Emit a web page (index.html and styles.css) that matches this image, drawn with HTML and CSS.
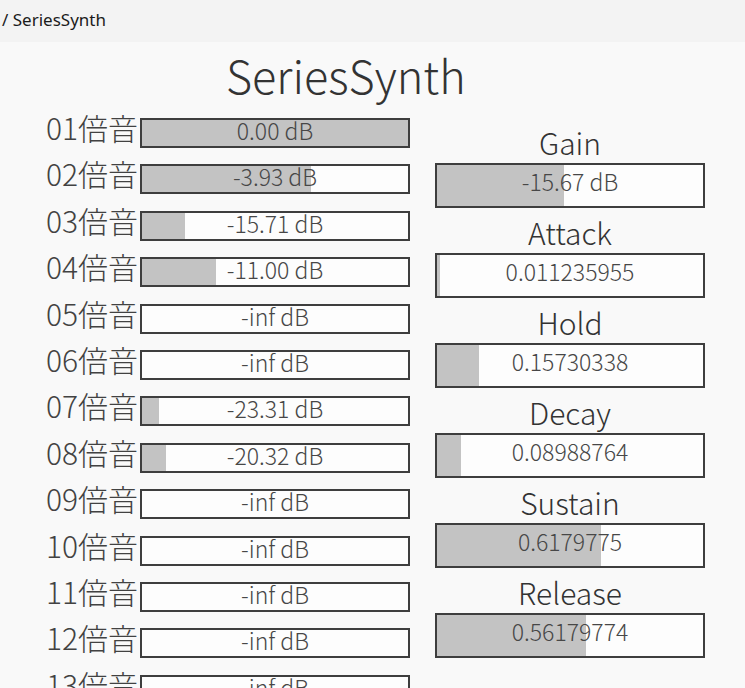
FILE: index.html
```html
<!DOCTYPE html>
<html lang="ja">
<head>
<meta charset="utf-8">
<title>SeriesSynth</title>
<link rel="stylesheet" href="styles.css">
</head>
<body>
<header class="topbar">/ SeriesSynth</header>
<main class="app">
  <h1 class="title">SeriesSynth</h1>
  <div class="columns">
    <section class="harmonics">
      <div class="row"><span class="label">01倍音</span><div class="bar"><span class="val">0.00 dB</span><div class="fill" style="width:100%"></div></div></div>
      <div class="row"><span class="label">02倍音</span><div class="bar"><span class="val">-3.93 dB</span><div class="fill" style="width:63.6%"></div></div></div>
      <div class="row"><span class="label">03倍音</span><div class="bar"><span class="val">-15.71 dB</span><div class="fill" style="width:16.0%"></div></div></div>
      <div class="row"><span class="label">04倍音</span><div class="bar"><span class="val">-11.00 dB</span><div class="fill" style="width:27.8%"></div></div></div>
      <div class="row"><span class="label">05倍音</span><div class="bar"><span class="val">-inf dB</span><div class="fill" style="width:0%"></div></div></div>
      <div class="row"><span class="label">06倍音</span><div class="bar"><span class="val">-inf dB</span><div class="fill" style="width:0%"></div></div></div>
      <div class="row"><span class="label">07倍音</span><div class="bar"><span class="val">-23.31 dB</span><div class="fill" style="width:6.3%"></div></div></div>
      <div class="row"><span class="label">08倍音</span><div class="bar"><span class="val">-20.32 dB</span><div class="fill" style="width:9.2%"></div></div></div>
      <div class="row"><span class="label">09倍音</span><div class="bar"><span class="val">-inf dB</span><div class="fill" style="width:0%"></div></div></div>
      <div class="row"><span class="label">10倍音</span><div class="bar"><span class="val">-inf dB</span><div class="fill" style="width:0%"></div></div></div>
      <div class="row"><span class="label">11倍音</span><div class="bar"><span class="val">-inf dB</span><div class="fill" style="width:0%"></div></div></div>
      <div class="row"><span class="label">12倍音</span><div class="bar"><span class="val">-inf dB</span><div class="fill" style="width:0%"></div></div></div>
      <div class="row"><span class="label">13倍音</span><div class="bar"><span class="val">-inf dB</span><div class="fill" style="width:0%"></div></div></div>
    </section>
    <section class="params">
      <div class="param"><div class="plabel">Gain</div><div class="bar big"><span class="val">-15.67 dB</span><div class="fill" style="width:47.7%"></div></div></div>
      <div class="param"><div class="plabel">Attack</div><div class="bar big"><span class="val">0.011235955</span><div class="fill" style="width:1.1%"></div></div></div>
      <div class="param"><div class="plabel">Hold</div><div class="bar big"><span class="val">0.15730338</span><div class="fill" style="width:15.7%"></div></div></div>
      <div class="param"><div class="plabel">Decay</div><div class="bar big"><span class="val">0.08988764</span><div class="fill" style="width:9.0%"></div></div></div>
      <div class="param"><div class="plabel">Sustain</div><div class="bar big"><span class="val">0.6179775</span><div class="fill" style="width:61.8%"></div></div></div>
      <div class="param"><div class="plabel">Release</div><div class="bar big"><span class="val">0.56179774</span><div class="fill" style="width:56.2%"></div></div></div>
    </section>
  </div>
</main>
</body>
</html>
```

FILE: styles.css
```css
html, body {
  margin: 0;
  padding: 0;
}
body {
  width: 745px;
  height: 688px;
  overflow: hidden;
  background: #f9f9f9;
  font-family: "Noto Sans CJK JP", "Noto Sans", sans-serif;
  color: #3a3a3a;
}
.topbar {
  height: 42px;
  line-height: 40px;
  padding-left: 2px;
  background: #f3f3f3;
  font-family: "Noto Sans", "Open Sans", sans-serif;
  font-size: 17px;
  color: #1b1b1b;
}
.app {
  padding-left: 37px;
}
.title {
  margin: 0 0 11px 0;
  padding-left: 189px;
  font-size: 45px;
  line-height: 65px;
  font-weight: 300;
  color: #333;
}
.columns {
  display: flex;
  align-items: flex-start;
  gap: 25px;
}
.harmonics {
  display: flex;
  flex-direction: column;
  gap: 16.4px;
  width: 373px;
}
.row {
  display: flex;
  align-items: flex-start;
  gap: 2px;
  height: 30px;
}
.label {
  width: 101px;
  text-align: right;
  font-size: 30px;
  line-height: 18px;
  font-weight: 300;
  color: #424242;
  white-space: nowrap;
}
.bar {
  display: grid;
  box-sizing: border-box;
  width: 270px;
  height: 30px;
  border: 2px solid #3e3e3e;
  background: #fdfdfd;
}
.bar .val {
  grid-area: 1 / 1;
  z-index: 1;
  align-self: start;
  text-align: center;
  font-size: 23px;
  line-height: 20px;
  font-weight: 300;
  color: #474747;
  white-space: nowrap;
}
.bar .fill {
  grid-area: 1 / 1;
  justify-self: start;
  height: 100%;
  background: #c3c3c3;
}
.params {
  display: flex;
  flex-direction: column;
  gap: 9px;
  width: 270px;
  margin-top: 9px;
}
.param {
  display: flex;
  flex-direction: column;
}
.plabel {
  text-align: center;
  font-size: 30px;
  line-height: 31px;
  font-weight: 300;
  color: #333;
  margin-bottom: 5px;
}
.bar.big {
  height: 45px;
}
.bar.big .val {
  line-height: 33px;
}
```
